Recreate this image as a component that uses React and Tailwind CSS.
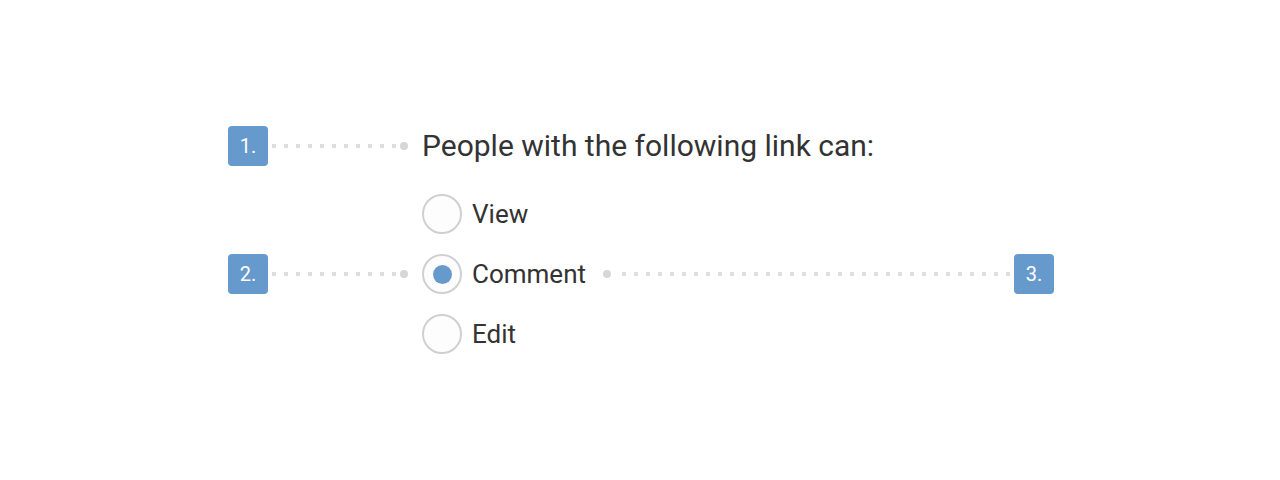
import React from "react";

function Badge({ n }) {
  return (
    <div className="w-10 h-10 shrink-0 rounded-[4px] bg-[#6699cc] text-white flex items-center justify-center text-[20px] leading-none">
      {n}
    </div>
  );
}

function Dots({ count }) {
  return (
    <div className="flex items-center gap-2">
      {Array.from({ length: count }).map((_, i) => (
        <span key={i} className="block w-1 h-1 bg-[#dedede]" />
      ))}
    </div>
  );
}

function EndDot() {
  return <span className="block w-2 h-2 rounded-full bg-[#d6d6d6]" />;
}

function Radio({ checked }) {
  return (
    <div className="w-10 h-10 shrink-0 rounded-full border-2 border-[#cfd1d1] bg-[#fdfdfd] flex items-center justify-center">
      {checked && <div className="w-[19px] h-[19px] rounded-full bg-[#6699cc]" />}
    </div>
  );
}

export default function App() {
  return (
    <div className="w-[1280px] h-[480px] bg-white font-['Roboto',sans-serif] text-[#333333] pt-[126px] pl-[228px]">
      <div className="flex items-center h-10">
        <Badge n="1." />
        <div className="ml-1 flex items-center">
          <Dots count={11} />
          <div className="ml-[4px]">
            <EndDot />
          </div>
        </div>
        <div className="ml-[14px] text-[30px] leading-none">
          People with the following link can:
        </div>
      </div>

      <div className="mt-[28px] flex flex-col gap-5">
        <div className="flex items-center h-10 pl-[194px]">
          <Radio />
          <span className="ml-[10px] text-[26px] leading-none">View</span>
        </div>

        <div className="flex items-center h-10">
          <Badge n="2." />
          <div className="ml-1 flex items-center">
            <Dots count={11} />
            <div className="ml-[4px]">
              <EndDot />
            </div>
          </div>
          <div className="ml-[14px] flex items-center">
            <Radio checked />
            <span className="ml-[10px] text-[26px] leading-none">Comment</span>
          </div>
          <div className="ml-[17px] flex items-center">
            <EndDot />
            <div className="ml-[11px]">
              <Dots count={33} />
            </div>
          </div>
          <div className="ml-[4px]">
            <Badge n="3." />
          </div>
        </div>

        <div className="flex items-center h-10 pl-[194px]">
          <Radio />
          <span className="ml-[10px] text-[26px] leading-none">Edit</span>
        </div>
      </div>
    </div>
  );
}
